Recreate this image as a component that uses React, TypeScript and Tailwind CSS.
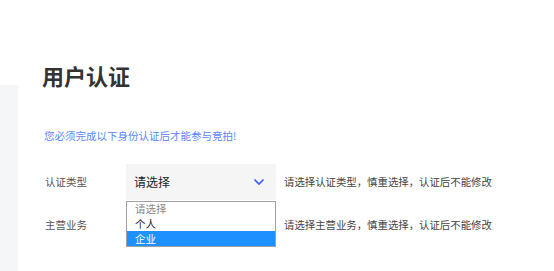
const font = "font-['Microsoft_YaHei','Noto_Sans_CJK_SC',sans-serif]";

function Chevron() {
  return (
    <svg width="12" height="8" viewBox="0 0 12 8" fill="none">
      <path d="M1.5 1.5 L6 6 L10.5 1.5" stroke="#3b5bfd" strokeWidth="1.6" />
    </svg>
  );
}

export default function App() {
  const options = ["请选择", "个人", "企业"];
  return (
    <div className={`relative h-[271px] w-[554px] overflow-hidden bg-white ${font}`}>
      <div className="flex h-full pt-[85px]">
        <div className="h-full w-[18px] bg-[#f5f6f8]" />
      </div>
      <div className="absolute left-0 top-0 w-full pl-[42px] pt-[60px]">
        <h1 className="text-[22px] font-semibold leading-[30px] text-[#333]">用户认证</h1>
        <p className="mt-[39px] pl-[2px] text-[10.5px] leading-[14px] text-[#5a86ff]">
          您必须完成以下身份认证后才能参与竞拍!
        </p>
        <div className="mt-[21px] flex items-center pl-[3px]">
          <span className="w-[81px] text-[10.5px] text-[#555]">认证类型</span>
          <div className="relative">
            <div className="flex h-[36px] w-[150px] items-center justify-between bg-[#f5f5f5] pl-[8px] pr-[11px] text-[12px] text-[#222]">
              <span>请选择</span>
              <Chevron />
            </div>
            <ul className="absolute left-0 top-[37px] z-10 w-[150px] border border-[#a0a0a0] bg-white text-[10.5px]">
              {options.map((o, i) => (
                <li
                  key={o}
                  className={
                    i === 2
                      ? "flex h-[14.6px] items-center bg-[#1e90ff] pl-[8px] text-white"
                      : i === 0
                        ? "flex h-[14.6px] items-center pl-[8px] text-[#888]"
                        : "flex h-[14.6px] items-center pl-[8px] text-[#222]"
                  }
                >
                  {o}
                </li>
              ))}
            </ul>
          </div>
          <span className="ml-[8px] text-[10.4px] text-[#444]">请选择认证类型，慎重选择，认证后不能修改</span>
        </div>
        <div className="mt-[7px] flex h-[36px] items-center pl-[3px]">
          <span className="w-[81px] text-[10.5px] text-[#555]">主营业务</span>
          <div className="w-[150px]" />
          <span className="ml-[8px] text-[10.4px] text-[#444]">请选择主营业务，慎重选择，认证后不能修改</span>
        </div>
      </div>
    </div>
  );
}
